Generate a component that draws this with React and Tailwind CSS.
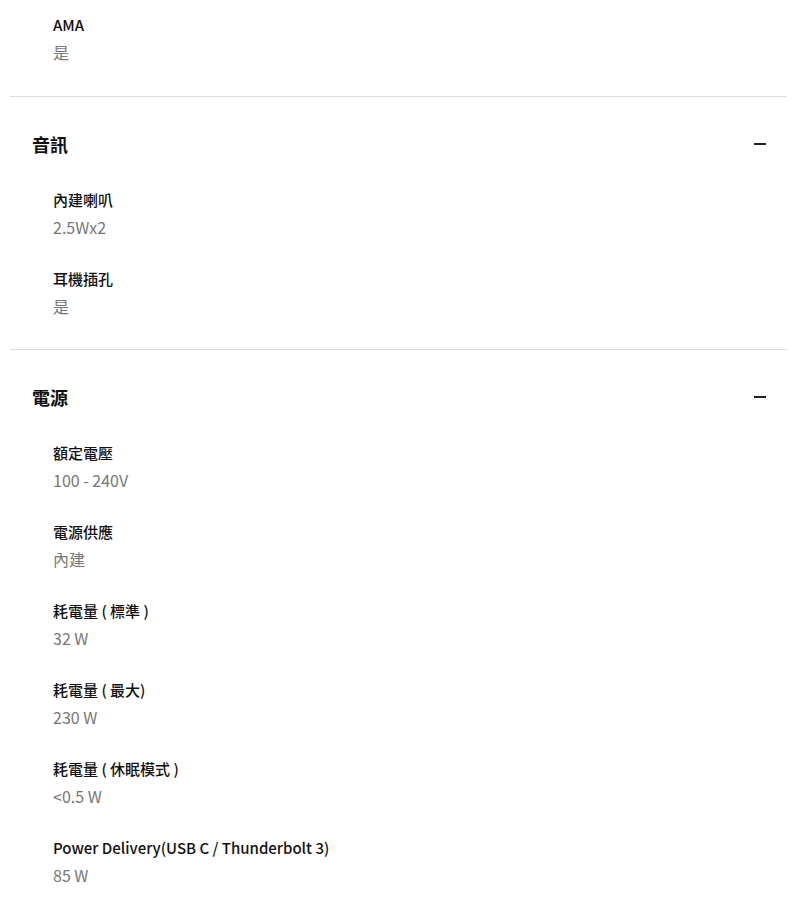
import React from 'react';

const font = { fontFamily: '"Noto Sans CJK TC", "Noto Sans", sans-serif' };

const Item = ({ label, value }) => (
  <div className="pl-[43px] mb-[25px] last:mb-0">
    <div className="text-[15px] leading-[28px] font-medium text-[#111]">{label}</div>
    <div className="text-[16px] leading-[26px] text-[#777]">{value}</div>
  </div>
);

const Section = ({ title, items }) => (
  <section className="border-t border-[#dcdcdc] pt-[23px] pb-[30px]">
    <div className="flex items-center justify-between h-[48px] pl-[22px] pr-[21px]">
      <h3 className="text-[18px] font-bold text-[#111]">{title}</h3>
      <span className="block w-[12px] h-[2px] bg-[#222]" />
    </div>
    <div className="mt-[18px]">
      {items.map((it) => (
        <Item key={it[0]} label={it[0]} value={it[1]} />
      ))}
    </div>
  </section>
);

export default function App() {
  return (
    <div className="bg-white min-h-screen" style={font}>
      <div className="ml-[10px] w-[777px]">
        <div className="pt-[11px] pb-[31px]">
          <Item label="AMA" value="是" />
        </div>
        <Section
          title="音訊"
          items={[
            ['內建喇叭', '2.5Wx2'],
            ['耳機插孔', '是'],
          ]}
        />
        <Section
          title="電源"
          items={[
            ['額定電壓', '100 - 240V'],
            ['電源供應', '內建'],
            ['耗電量 ( 標準 )', '32 W'],
            ['耗電量 ( 最大)', '230 W'],
            ['耗電量 ( 休眠模式 )', '<0.5 W'],
            ['Power Delivery(USB C / Thunderbolt 3)', '85 W'],
          ]}
        />
      </div>
    </div>
  );
}
